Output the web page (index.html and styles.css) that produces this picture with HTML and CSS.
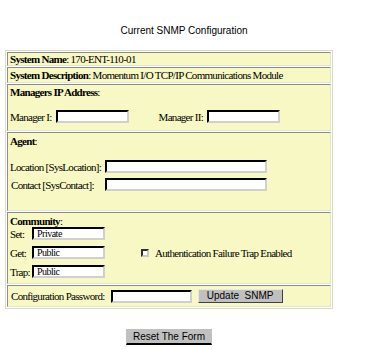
FILE: index.html
```html
<!DOCTYPE html>
<html lang="en">
<head>
    <meta charset="UTF-8">
    <title>Current SNMP Configuration</title>
    <link rel="stylesheet" href="styles.css">
</head>
<body>
    <div class="page">
        <div class="title">Current SNMP Configuration</div>

        <form class="config">
            <div class="row line">
                <b>System Name</b>: 170-ENT-110-01
            </div>
            <div class="row line">
                <b>System Description</b>: Momentum I/O TCP/IP Communications Module
            </div>

            <div class="row managers">
                <b>Managers IP Address</b>:
                <div class="pair">
                    <label>Manager I: <input type="text" class="field short"></label>
                    <label class="second">Manager II: <input type="text" class="field short"></label>
                </div>
            </div>

            <div class="row agent">
                <b>Agent</b>:
                <div class="fields">
                    <span>Location [SysLocation]:</span>
                    <input type="text" class="field long">
                    <span class="indent">Contact [SysContact]:</span>
                    <input type="text" class="field long">
                </div>
            </div>

            <div class="row community">
                <b>Community</b>:
                <div class="community-body">
                    <div class="strings">
                        <span>Set:</span><input type="text" class="field short" value="Private">
                        <span>Get:</span><input type="text" class="field short" value="Public">
                        <span>Trap:</span><input type="text" class="field short" value="Public">
                    </div>
                    <label class="trap">
                        <input type="checkbox" class="check">
                        Authentication Failure Trap Enabled
                    </label>
                </div>
            </div>

            <div class="row password">
                <span>Configuration Password:</span>
                <input type="password" class="field pass">
                <button type="button" class="btn update">Update&nbsp; SNMP</button>
            </div>
        </form>

        <div class="reset-wrap">
            <button type="reset" class="btn reset">Reset The Form</button>
        </div>
    </div>
</body>
</html>
```

FILE: styles.css
```css
body {
    margin: 0;
    background: #ffffff;
    color: #000000;
    font-family: 'Liberation Serif', 'Times New Roman', serif;
    font-size: 11px;
}
.page {
    width: 328px;
    margin-left: 5px;
}
.title {
    padding: 26px 0 0 30px;
    height: 24px;
    text-align: center;
    font-family: 'Liberation Sans', Arial, sans-serif;
    font-size: 10px;
    line-height: 10px;
}
.config {
    margin: 0;
    border: 1px solid #dcdcc0;
    padding: 1px;
    display: flex;
    flex-direction: column;
    gap: 1px;
    letter-spacing: -0.7px;
    white-space: nowrap;
}
.row {
    background: #f8f8c4;
    border: 1px solid;
    border-color: #8c8c8c #e4e4d4 #e4e4d4 #8c8c8c;
    padding: 0 2px;
    line-height: 12px;
}
.line {
    height: 12px;
}
.row.line + .row.line {
    height: 13px;
    padding-top: 1px;
}
.field {
    box-sizing: border-box;
    height: 13px;
    margin: 0;
    padding: 0 3px;
    border: 2px solid;
    border-color: #000000 #d0d0d0 #d0d0d0 #000000;
    background: #ffffff;
    font-family: 'Liberation Serif', 'Times New Roman', serif;
    font-size: 10px;
    letter-spacing: -0.5px;
    vertical-align: middle;
}
.short {
    width: 73px;
}
.long {
    width: 162px;
}
.pass {
    width: 81px;
}
.managers {
    height: 44px;
    padding-top: 1px;
}
.pair {
    display: flex;
    align-items: center;
    margin-top: 12px;
}
.pair label {
    display: flex;
    align-items: center;
}
.pair .second {
    margin-left: 30px;
}
.pair .field {
    margin-left: 4px;
}
.agent {
    height: 75px;
    padding-top: 2px;
}
.fields {
    display: grid;
    grid-template-columns: 95px 162px;
    align-items: center;
    row-gap: 5px;
    margin-top: 13px;
}
.indent {
    padding-left: 1px;
}
.community {
    height: 68px;
    padding-top: 2px;
}
.community-body {
    display: flex;
    align-items: center;
    margin-top: 0;
}
.strings {
    display: grid;
    grid-template-columns: 22px 73px;
    align-items: center;
    row-gap: 6px;
}
.trap {
    margin-left: 36px;
    display: flex;
    align-items: center;
    gap: 6px;
}
.check {
    appearance: none;
    -webkit-appearance: none;
    box-sizing: border-box;
    width: 8px;
    height: 8px;
    margin: 0;
    border: 2px solid;
    border-color: #303030 #c8c8c8 #c8c8c8 #303030;
    background: #ffffff;
}
.password {
    height: 20px;
    display: flex;
    align-items: center;
    padding-left: 3px;
}
.password .field {
    margin-left: 6px;
}
.btn {
    box-sizing: border-box;
    height: 14px;
    margin: 0;
    padding: 0;
    background: #c0c0c0;
    border: 1px solid;
    border-color: #e8e8e8 #404040 #404040 #e8e8e8;
    font-family: 'Liberation Sans', Arial, sans-serif;
    font-size: 10px;
    line-height: 10px;
    letter-spacing: 0;
    color: #000000;
}
.update {
    width: 85px;
    margin-left: 6px;
}
.reset-wrap {
    display: flex;
    justify-content: center;
    margin-top: 20px;
}
.reset {
    width: 86px;
    height: 16px;
    border-color: #c0c0c0 #c0c0c0 #000000 #c0c0c0;
    border-bottom-width: 2px;
}
```
